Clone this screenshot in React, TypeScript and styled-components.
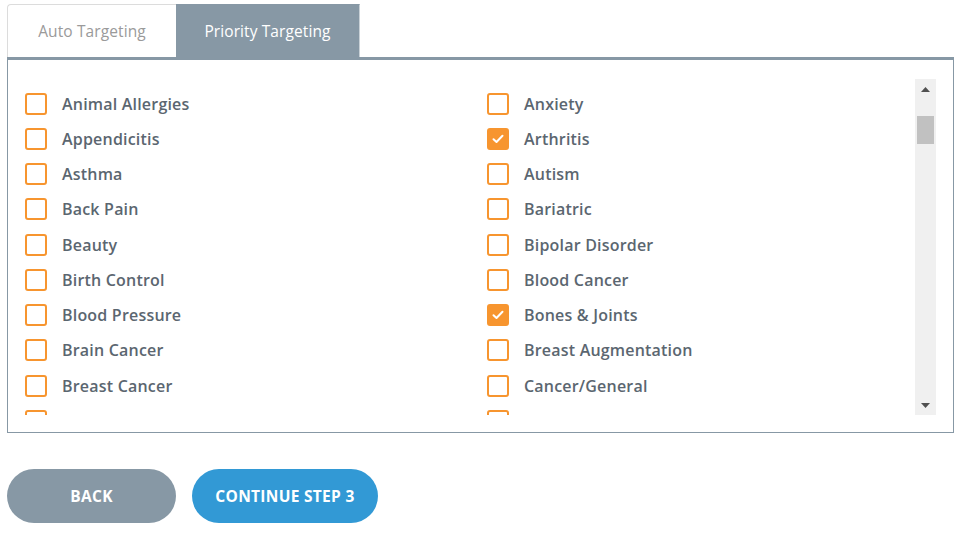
import React from "react";
import styled, { createGlobalStyle } from "styled-components";

const Global = createGlobalStyle`
  html, body { margin: 0; padding: 0; background: #fff; }
  body { font-family: "Open Sans", Lato, sans-serif; }
`;

const Page = styled.div`
  padding: 4px 13px 0 7px;
  width: 947px;
`;

const Tabs = styled.div`
  display: flex;
  border-bottom: 3px solid #8798a5;
`;

const Tab = styled.div<{ $active?: boolean }>`
  height: 53px;
  box-sizing: border-box;
  display: flex;
  align-items: center;
  justify-content: center;
  font-size: 15.5px;
  letter-spacing: 0.1px;
  padding-bottom: 1px;
  width: ${(p) => (p.$active ? "184px" : "169px")};
  background: ${(p) => (p.$active ? "#8798a5" : "#fff")};
  color: ${(p) => (p.$active ? "#fff" : "#9a9a9a")};
  border-top: 1px solid ${(p) => (p.$active ? "#8798a5" : "#dcdcdc")};
  border-left: ${(p) => (p.$active ? "none" : "1px solid #dcdcdc")};
  border-right: ${(p) => (p.$active ? "1px solid #c9d1d7" : "none")};
  border-top-left-radius: ${(p) => (p.$active ? "0" : "4px")};
`;

const Panel = styled.div`
  display: flex;
  border: 1px solid #8798a5;
  border-top: none;
  padding: 19px 17px 17px 17px;
`;

const List = styled.div`
  flex: 1;
  height: 336px;
  overflow: hidden;
  display: grid;
  grid-template-columns: 462px 1fr;
  grid-auto-rows: 35.25px;
  align-content: start;
  padding-top: 7px;
  box-sizing: border-box;
`;

const Item = styled.label`
  display: flex;
  align-items: center;
  gap: 15px;
  font-size: 16px;
  letter-spacing: 0.2px;
  font-weight: 600;
  color: #5b6670;
`;

const Box = styled.span<{ $checked?: boolean }>`
  width: 22px;
  height: 22px;
  box-sizing: border-box;
  border: 2px solid #f7952f;
  border-radius: 3px;
  background: ${(p) => (p.$checked ? "#f7952f" : "#fff")};
  display: flex;
  align-items: center;
  justify-content: center;
  flex: none;
`;

const Scrollbar = styled.div`
  width: 21px;
  height: 336px;
  background: #f0f0f0;
  display: flex;
  flex-direction: column;
  align-items: center;
  justify-content: space-between;
`;

const Arrow = styled.div`
  height: 20px;
  width: 21px;
  display: flex;
  align-items: center;
  justify-content: center;
`;

const TrackTop = styled.div`
  display: flex;
  flex-direction: column;
  align-items: center;
`;

const Thumb = styled.div`
  width: 17px;
  height: 28px;
  background: #c1c1c1;
  margin-top: 17px;
`;

const Buttons = styled.div`
  display: flex;
  gap: 16px;
  margin-top: 36px;
`;

const Button = styled.button<{ $primary?: boolean }>`
  height: 54px;
  border: none;
  border-radius: 27px;
  width: ${(p) => (p.$primary ? "186px" : "169px")};
  background: ${(p) => (p.$primary ? "#3299d5" : "#8798a5")};
  color: #fff;
  font-family: "Open Sans", Lato, sans-serif;
  font-weight: 700;
  font-size: 15.5px;
  letter-spacing: 0.3px;
  text-transform: uppercase;
  cursor: pointer;
`;

const items: [string, boolean][] = [
  ["Animal Allergies", false],
  ["Anxiety", false],
  ["Appendicitis", false],
  ["Arthritis", true],
  ["Asthma", false],
  ["Autism", false],
  ["Back Pain", false],
  ["Bariatric", false],
  ["Beauty", false],
  ["Bipolar Disorder", false],
  ["Birth Control", false],
  ["Blood Cancer", false],
  ["Blood Pressure", false],
  ["Bones & Joints", true],
  ["Brain Cancer", false],
  ["Breast Augmentation", false],
  ["Breast Cancer", false],
  ["Cancer/General", false],
  ["Cholesterol", false],
  ["Chronic Pain", false],
];

const Check = () => (
  <svg width="12" height="10" viewBox="0 0 12 10">
    <path d="M1.5 5.2 L4.5 8 L10.5 1.8" fill="none" stroke="#fff" strokeWidth="2" strokeLinecap="round" strokeLinejoin="round" />
  </svg>
);

export default function App() {
  return (
    <Page>
      <Global />
      <Tabs>
        <Tab>Auto Targeting</Tab>
        <Tab $active>Priority Targeting</Tab>
      </Tabs>
      <Panel>
        <List>
          {items.map(([name, checked]) => (
            <Item key={name}>
              <Box $checked={checked}>{checked && <Check />}</Box>
              {name}
            </Item>
          ))}
        </List>
        <Scrollbar>
          <TrackTop>
            <Arrow>
              <svg width="9" height="5" viewBox="0 0 9 5"><path d="M0 5 L4.5 0 L9 5 Z" fill="#505050" /></svg>
            </Arrow>
            <Thumb />
          </TrackTop>
          <Arrow>
            <svg width="9" height="5" viewBox="0 0 9 5"><path d="M0 0 L9 0 L4.5 5 Z" fill="#505050" /></svg>
          </Arrow>
        </Scrollbar>
      </Panel>
      <Buttons>
        <Button>Back</Button>
        <Button $primary>Continue Step 3</Button>
      </Buttons>
    </Page>
  );
}
